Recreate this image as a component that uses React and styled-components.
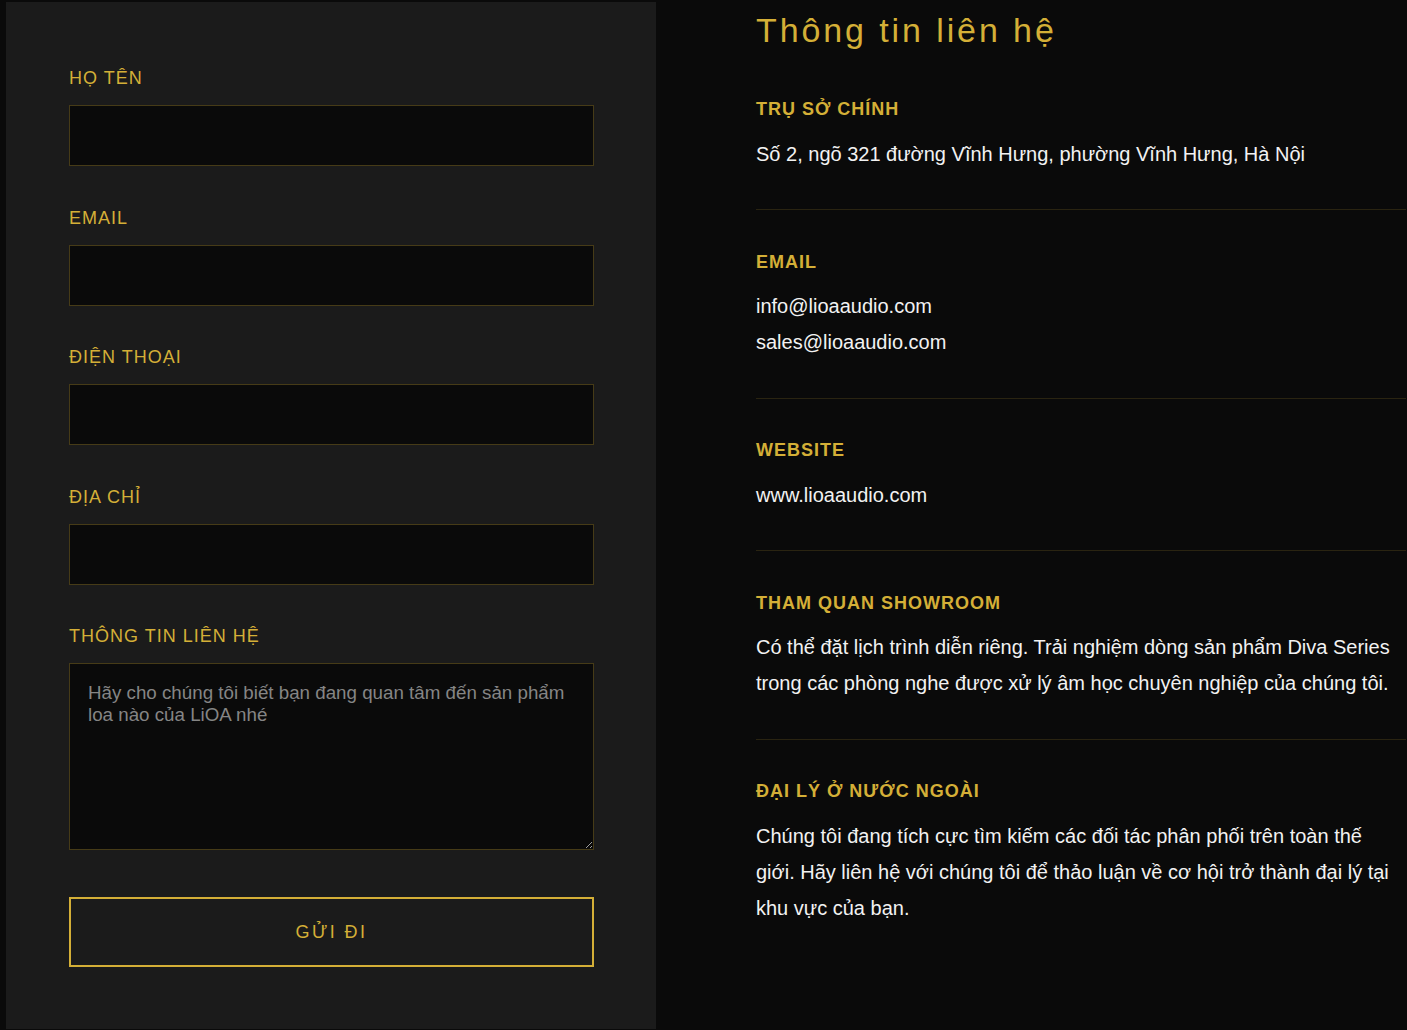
import React from 'react';
import styled, { createGlobalStyle } from 'styled-components';

const GOLD = '#d4af37';

const GlobalStyle = createGlobalStyle`
  html, body {
    margin: 0;
    padding: 0;
    background: #0a0a0a;
    font-family: "Liberation Sans", Arial, sans-serif;
  }
  * {
    box-sizing: border-box;
  }
`;

const Page = styled.div`
  display: grid;
  grid-template-columns: 650px 650px;
  column-gap: 100px;
  align-items: start;
  padding: 2px 0 0 6px;
  min-height: 100vh;
  overflow: hidden;
`;

const FormPanel = styled.form`
  background: #1b1b1b;
  padding: 66px 62px 62px 63px;
`;

const Field = styled.div`
  margin-bottom: ${p => (p.$last ? '47px' : '41.5px')};
`;

const Label = styled.label`
  display: block;
  color: ${GOLD};
  font-size: 18px;
  line-height: 21px;
  letter-spacing: 1px;
  margin-bottom: 16px;
`;

const Input = styled.input`
  display: block;
  width: 100%;
  height: 61px;
  background: #0a0a0a;
  border: 1px solid rgba(212, 175, 55, 0.3);
  color: #f0f0f0;
  font-family: inherit;
  font-size: 18px;
  padding: 0 18px;
  outline: none;
`;

const TextArea = styled.textarea`
  display: block;
  width: 100%;
  height: 187px;
  background: #0a0a0a;
  border: 1px solid rgba(212, 175, 55, 0.3);
  color: #f0f0f0;
  font-family: inherit;
  font-size: 18.75px;
  line-height: 22px;
  padding: 18px 18px;
  outline: none;
  resize: vertical;

  &::placeholder {
    color: #858585;
  }
`;

const SubmitButton = styled.button`
  display: block;
  width: 100%;
  height: 70px;
  background: transparent;
  border: 2px solid ${GOLD};
  color: ${GOLD};
  font-family: inherit;
  font-size: 18px;
  letter-spacing: 2.4px;
  cursor: pointer;
`;

const InfoColumn = styled.div`
  display: flex;
  flex-direction: column;
`;

const Title = styled.h2`
  margin: 8px 0 7.5px;
  color: ${GOLD};
  font-size: 34px;
  font-weight: 400;
  letter-spacing: 2.9px;
  line-height: 40px;
`;

const InfoSection = styled.section`
  padding: 41.5px 0 37.5px;
  border-bottom: ${p => (p.$last ? 'none' : '1px solid rgba(212, 175, 55, 0.16)')};
`;

const InfoHeading = styled.h3`
  margin: 0 0 15.5px;
  color: ${GOLD};
  font-size: 18px;
  font-weight: 700;
  letter-spacing: 1px;
  line-height: 21px;
`;

const InfoText = styled.p`
  margin: 0;
  color: #f2f2f2;
  font-size: 20px;
  line-height: 36px;
`;

const fields = [
  { id: 'name', label: 'HỌ TÊN', type: 'text' },
  { id: 'email', label: 'EMAIL', type: 'email' },
  { id: 'phone', label: 'ĐIỆN THOẠI', type: 'tel' },
  { id: 'address', label: 'ĐỊA CHỈ', type: 'text' },
];

const sections = [
  { title: 'TRỤ SỞ CHÍNH', lines: ['Số 2, ngõ 321 đường Vĩnh Hưng, phường Vĩnh Hưng, Hà Nội'] },
  { title: 'EMAIL', lines: ['info@lioaaudio.com', 'sales@lioaaudio.com'] },
  { title: 'WEBSITE', lines: ['www.lioaaudio.com'] },
  {
    title: 'THAM QUAN SHOWROOM',
    lines: ['Có thể đặt lịch trình diễn riêng. Trải nghiệm dòng sản phẩm Diva Series trong các phòng nghe được xử lý âm học chuyên nghiệp của chúng tôi.'],
  },
  {
    title: 'ĐẠI LÝ Ở NƯỚC NGOÀI',
    lines: ['Chúng tôi đang tích cực tìm kiếm các đối tác phân phối trên toàn thế giới. Hãy liên hệ với chúng tôi để thảo luận về cơ hội trở thành đại lý tại khu vực của bạn.'],
  },
];

export default function App() {
  return (
    <>
      <GlobalStyle />
      <Page>
        <FormPanel onSubmit={e => e.preventDefault()}>
          {fields.map(f => (
            <Field key={f.id}>
              <Label htmlFor={f.id}>{f.label}</Label>
              <Input id={f.id} type={f.type} />
            </Field>
          ))}
          <Field $last>
            <Label htmlFor="message">THÔNG TIN LIÊN HỆ</Label>
            <TextArea
              id="message"
              placeholder="Hãy cho chúng tôi biết bạn đang quan tâm đến sản phẩm loa nào của LiOA nhé"
            />
          </Field>
          <SubmitButton type="submit">GỬI ĐI</SubmitButton>
        </FormPanel>

        <InfoColumn>
          <Title>Thông tin liên hệ</Title>
          {sections.map((s, i) => (
            <InfoSection key={s.title} $last={i === sections.length - 1}>
              <InfoHeading>{s.title}</InfoHeading>
              {s.lines.map(line => (
                <InfoText key={line}>{line}</InfoText>
              ))}
            </InfoSection>
          ))}
        </InfoColumn>
      </Page>
    </>
  );
}
